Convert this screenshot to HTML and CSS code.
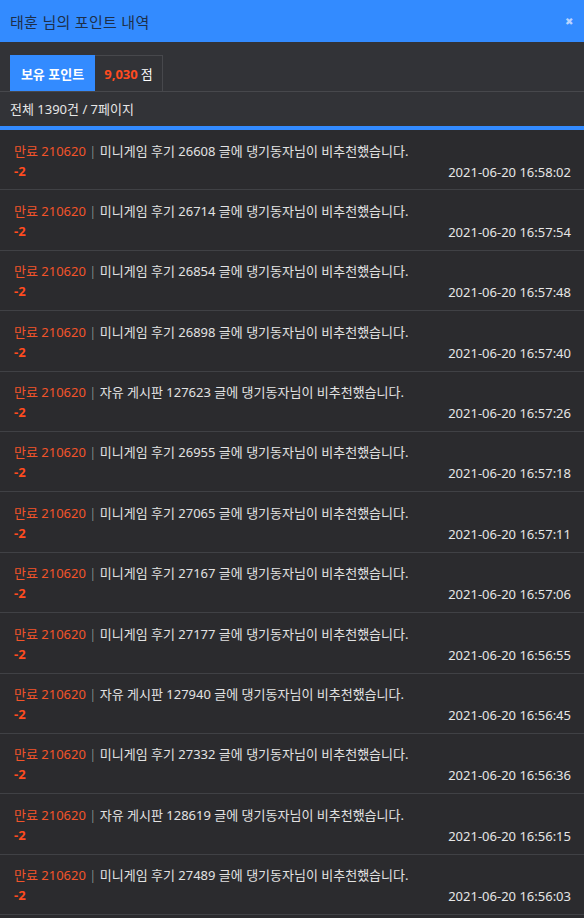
FILE: index.html
```html
<!DOCTYPE html>
<html>
<head>
    <meta charset="UTF-8">
    <title>포인트 내역</title>
    <link rel="stylesheet" href="styles.css">
</head>
<body>
    <div class="pop_head">
        <h1 class="pop_title">태훈 님의 포인트 내역</h1>
        <a href="#" class="pop_close">&#10006;</a>
    </div>
    <div class="pop_body">
        <div class="point_tab">
            <span class="tab_on">보유 포인트</span>
            <span class="tab_val"><b>9,030</b> 점</span>
        </div>
        <div class="total">전체 1390건 / 7페이지</div>
        <ul class="point_list">
            <li><p><em>만료 210620</em> <i>|</i> 미니게임 후기 26608 글에 댕기동자님이 비추천했습니다.</p><div class="row2"><b>-2</b><span>2021-06-20 16:58:02</span></div></li>
            <li><p><em>만료 210620</em> <i>|</i> 미니게임 후기 26714 글에 댕기동자님이 비추천했습니다.</p><div class="row2"><b>-2</b><span>2021-06-20 16:57:54</span></div></li>
            <li><p><em>만료 210620</em> <i>|</i> 미니게임 후기 26854 글에 댕기동자님이 비추천했습니다.</p><div class="row2"><b>-2</b><span>2021-06-20 16:57:48</span></div></li>
            <li><p><em>만료 210620</em> <i>|</i> 미니게임 후기 26898 글에 댕기동자님이 비추천했습니다.</p><div class="row2"><b>-2</b><span>2021-06-20 16:57:40</span></div></li>
            <li><p><em>만료 210620</em> <i>|</i> 자유 게시판 127623 글에 댕기동자님이 비추천했습니다.</p><div class="row2"><b>-2</b><span>2021-06-20 16:57:26</span></div></li>
            <li><p><em>만료 210620</em> <i>|</i> 미니게임 후기 26955 글에 댕기동자님이 비추천했습니다.</p><div class="row2"><b>-2</b><span>2021-06-20 16:57:18</span></div></li>
            <li><p><em>만료 210620</em> <i>|</i> 미니게임 후기 27065 글에 댕기동자님이 비추천했습니다.</p><div class="row2"><b>-2</b><span>2021-06-20 16:57:11</span></div></li>
            <li><p><em>만료 210620</em> <i>|</i> 미니게임 후기 27167 글에 댕기동자님이 비추천했습니다.</p><div class="row2"><b>-2</b><span>2021-06-20 16:57:06</span></div></li>
            <li><p><em>만료 210620</em> <i>|</i> 미니게임 후기 27177 글에 댕기동자님이 비추천했습니다.</p><div class="row2"><b>-2</b><span>2021-06-20 16:56:55</span></div></li>
            <li><p><em>만료 210620</em> <i>|</i> 자유 게시판 127940 글에 댕기동자님이 비추천했습니다.</p><div class="row2"><b>-2</b><span>2021-06-20 16:56:45</span></div></li>
            <li><p><em>만료 210620</em> <i>|</i> 미니게임 후기 27332 글에 댕기동자님이 비추천했습니다.</p><div class="row2"><b>-2</b><span>2021-06-20 16:56:36</span></div></li>
            <li><p><em>만료 210620</em> <i>|</i> 자유 게시판 128619 글에 댕기동자님이 비추천했습니다.</p><div class="row2"><b>-2</b><span>2021-06-20 16:56:15</span></div></li>
            <li><p><em>만료 210620</em> <i>|</i> 미니게임 후기 27489 글에 댕기동자님이 비추천했습니다.</p><div class="row2"><b>-2</b><span>2021-06-20 16:56:03</span></div></li>
        </ul>
    </div>
</body>
</html>
```

FILE: styles.css
```css
*{
    margin:0;
    padding:0;
    box-sizing:border-box;
}
body{
    background:#2b2b2e;
    font-family:"Noto Sans","Noto Sans CJK KR",sans-serif;
    font-size:13px;
    color:#e2e2e2;
    overflow:hidden;
}
ul{
    list-style:none;
}
em,i{
    font-style:normal;
}
.pop_head{
    height:42px;
    background:#338bff;
    display:flex;
    align-items:center;
    justify-content:space-between;
    padding:0 10px 0 10px;
}
.pop_title{
    font-size:15px;
    font-weight:400;
    color:#1d2f4a;
    letter-spacing:0.3px;
}
.pop_close{
    color:#b9d4ff;
    text-decoration:none;
    font-size:10px;
    margin-right:1px;
}
.pop_body{
    background:#323337;
}
.point_tab{
    display:flex;
    padding:13px 10px 0;
    border-bottom:1px solid #47484c;
}
.point_tab>span{
    height:36px;
    display:flex;
    align-items:center;
    justify-content:center;
    font-size:13px;
}
.tab_on{
    width:85px;
    background:#338bff;
    color:#fff;
    font-weight:700;
}
.tab_val{
    width:68px;
    border:1px solid #47484c;
    border-bottom:0;
    border-left:0;
    color:#fff;
}
.tab_val b{
    color:#ff4b1f;
    margin-right:3px;
}
.total{
    height:38px;
    line-height:34px;
    padding-left:10px;
    border-bottom:4px solid #338bff;
    color:#e6e6e6;
}
.point_list li{
    background:#2b2b2e;
    border-bottom:1px solid #404145;
    padding:10.5px 13px 8.9px 14px;
    height:60.4px;
}
.point_list p{
    line-height:20px;
}
.point_list em{
    color:#f2542a;
}
.point_list i{
    color:#a8a8a8;
    font-weight:300;
}
.row2{
    display:flex;
    justify-content:space-between;
    line-height:20px;
}
.row2 b{
    color:#ff4b1f;
}
.row2 span{
    color:#e6e6e6;
    margin-top:1px;
}
```
